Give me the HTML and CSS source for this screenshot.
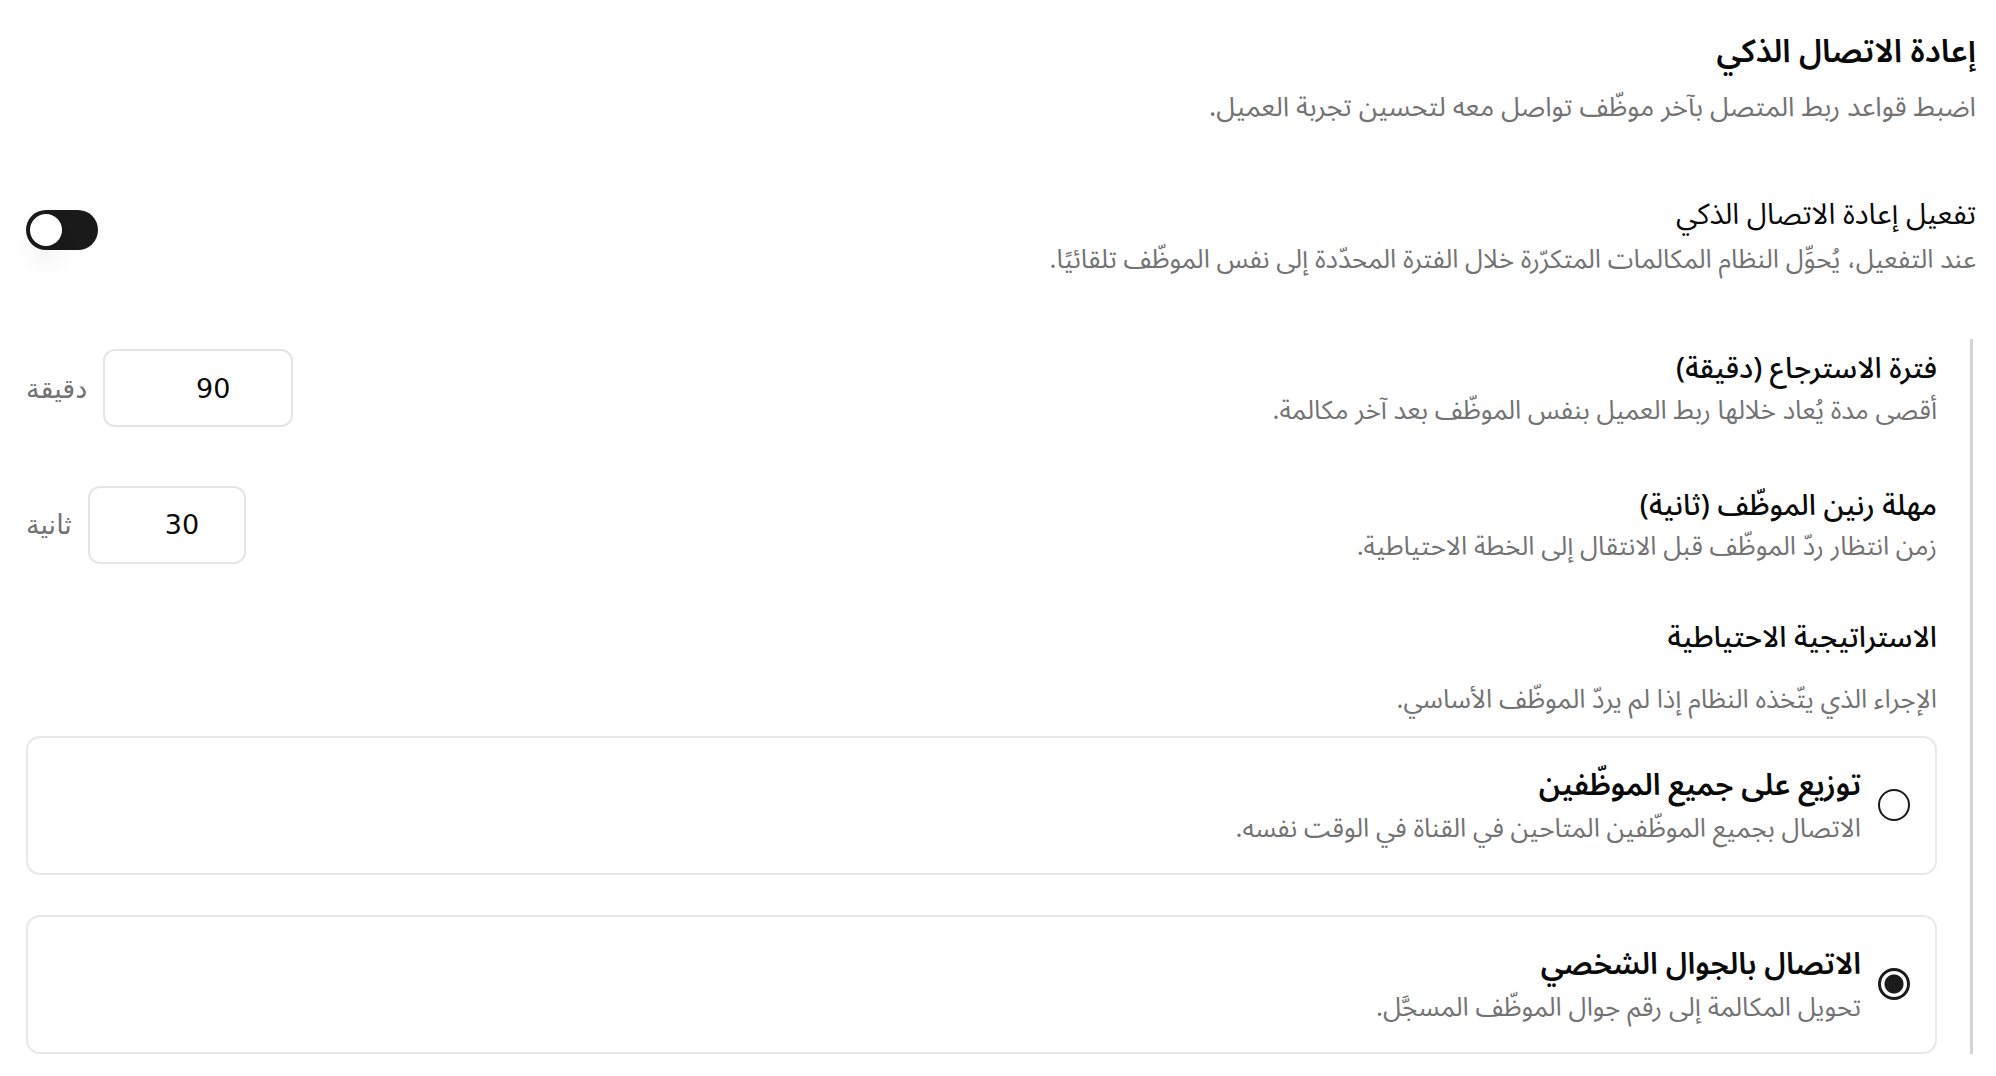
FILE: index.html
```html
<!DOCTYPE html>
<html lang="ar" dir="rtl">
  <head>
    <meta charset="UTF-8" />
    <link rel="stylesheet" href="styles.css">
  </head>

  <body>
    <div class="settings">
      <div class="settings-header">
        <h2 class="settings-title">إعادة الاتصال الذكي</h2>
        <p class="settings-desc">اضبط قواعد ربط المتصل بآخر موظّف تواصل معه لتحسين تجربة العميل.</p>
      </div>

      <div class="setting-row toggle-row">
        <div class="setting-text">
          <label class="setting-label" for="smart-reconnect">تفعيل إعادة الاتصال الذكي</label>
          <p class="setting-hint">عند التفعيل، يُحوِّل النظام المكالمات المتكرّرة خلال الفترة المحدّدة إلى نفس الموظّف تلقائيًا.</p>
        </div>
        <button class="switch is-on" id="smart-reconnect" type="button" role="switch" aria-checked="true">
          <span class="switch-thumb"></span>
        </button>
      </div>

      <div class="nested">
        <div class="setting-row">
          <div class="setting-text">
            <label class="setting-label strong" for="lookback">فترة الاسترجاع (دقيقة)</label>
            <p class="setting-hint">أقصى مدة يُعاد خلالها ربط العميل بنفس الموظّف بعد آخر مكالمة.</p>
          </div>
          <div class="number-field">
            <input id="lookback" class="number-input number-input--wide" type="text" inputmode="numeric" value="90" />
            <span class="unit">دقيقة</span>
          </div>
        </div>

        <div class="setting-row">
          <div class="setting-text">
            <label class="setting-label strong" for="ring-timeout">مهلة رنين الموظّف (ثانية)</label>
            <p class="setting-hint">زمن انتظار ردّ الموظّف قبل الانتقال إلى الخطة الاحتياطية.</p>
          </div>
          <div class="number-field">
            <input id="ring-timeout" class="number-input number-input--narrow" type="text" inputmode="numeric" value="30" />
            <span class="unit">ثانية</span>
          </div>
        </div>

        <div class="fallback">
          <h3 class="setting-label strong">الاستراتيجية الاحتياطية</h3>
          <p class="setting-hint fallback-hint">الإجراء الذي يتّخذه النظام إذا لم يردّ الموظّف الأساسي.</p>

          <label class="option-card">
            <input class="option-radio" type="radio" name="fallback" value="ring-all" />
            <span class="option-text">
              <span class="option-title">توزيع على جميع الموظّفين</span>
              <span class="option-desc">الاتصال بجميع الموظّفين المتاحين في القناة في الوقت نفسه.</span>
            </span>
          </label>

          <label class="option-card">
            <input class="option-radio" type="radio" name="fallback" value="mobile" checked />
            <span class="option-text">
              <span class="option-title">الاتصال بالجوال الشخصي</span>
              <span class="option-desc">تحويل المكالمة إلى رقم جوال الموظّف المسجَّل.</span>
            </span>
          </label>
        </div>
      </div>
    </div>
  </body>
</html>
```

FILE: styles.css
```css
* {
  box-sizing: border-box;
}

body {
  margin: 0;
  background: #fff;
  color: #0a0a0a;
  font-family: 'Noto Sans Arabic', 'Noto Sans', 'DejaVu Sans', sans-serif;
}

.settings {
  padding: 28px 20px 0 26px;
}

.settings-title {
  margin: 0;
  font-size: 32px;
  font-weight: 600;
  line-height: 1.5;
}
.settings-desc {
  margin: 12px 0 0;
  font-size: 27px;
  line-height: 1.5;
  color: #737373;
}

.setting-row {
  display: flex;
  align-items: center;
  justify-content: space-between;
  gap: 32px;
}
.toggle-row {
  margin-top: 64px;
}
.toggle-row .setting-hint {
  margin-top: 4px;
}
.setting-text {
  display: flex;
  flex-direction: column;
}
.setting-label {
  margin: 0;
  font-size: 29px;
  font-weight: 400;
  line-height: 1.5;
}
.setting-label.strong {
  font-weight: 500;
}
.setting-hint {
  margin: 0;
  font-size: 26px;
  line-height: 1.5;
  color: #737373;
}

.switch {
  position: relative;
  width: 72px;
  height: 40px;
  margin-bottom: 12px;
  padding: 0;
  border: none;
  border-radius: 20px;
  background: #1a1a1a;
  flex-shrink: 0;
}
.switch-thumb {
  position: absolute;
  top: 4px;
  right: 4px;
  width: 32px;
  height: 32px;
  border-radius: 50%;
  background: #fff;
  box-shadow: 0 18px 24px rgba(0, 0, 0, 0.05);
}
.switch.is-on .switch-thumb {
  right: auto;
  left: 4px;
}

.nested {
  margin: 60px 3px 0 0;
  padding: 8px 33px 0 0;
  border-right: 3px solid #d4d4d4;
}
.nested .setting-row + .setting-row {
  margin-top: 54px;
}

.number-field {
  display: flex;
  align-items: center;
  gap: 16px;
  font-family: 'DejaVu Sans', sans-serif;
}
.number-input {
  height: 78px;
  padding: 0 16px 0 46px;
  border: 2px solid #e5e5e5;
  border-radius: 12px;
  font-family: 'DejaVu Sans', sans-serif;
  font-size: 27px;
  color: #0a0a0a;
  text-align: center;
  outline: none;
}
.number-input--wide {
  width: 190px;
}
.number-input--narrow {
  width: 158px;
}
.unit {
  font-size: 27px;
  color: #737373;
}

.fallback {
  margin-top: 50px;
}
.fallback-hint {
  margin-top: 20px;
}

.option-card {
  display: flex;
  align-items: center;
  gap: 17px;
  margin-top: 40px;
  padding: 25px;
  border: 2px solid #e8e8e8;
  border-radius: 14px;
}
.fallback-hint + .option-card {
  margin-top: 17px;
}
.option-radio {
  appearance: none;
  width: 32px;
  height: 32px;
  margin: 0;
  border: 2px solid #1a1a1a;
  border-radius: 50%;
  flex-shrink: 0;
}
.option-radio:checked {
  border-width: 3px;
  background: radial-gradient(circle, #1a1a1a 0 9px, transparent 10px);
}
.option-text {
  display: flex;
  flex-direction: column;
}
.option-title {
  font-size: 30px;
  font-weight: 600;
  line-height: 1.5;
}
.option-desc {
  margin-top: 1px;
  font-size: 26px;
  line-height: 1.5;
  color: #737373;
}
```
